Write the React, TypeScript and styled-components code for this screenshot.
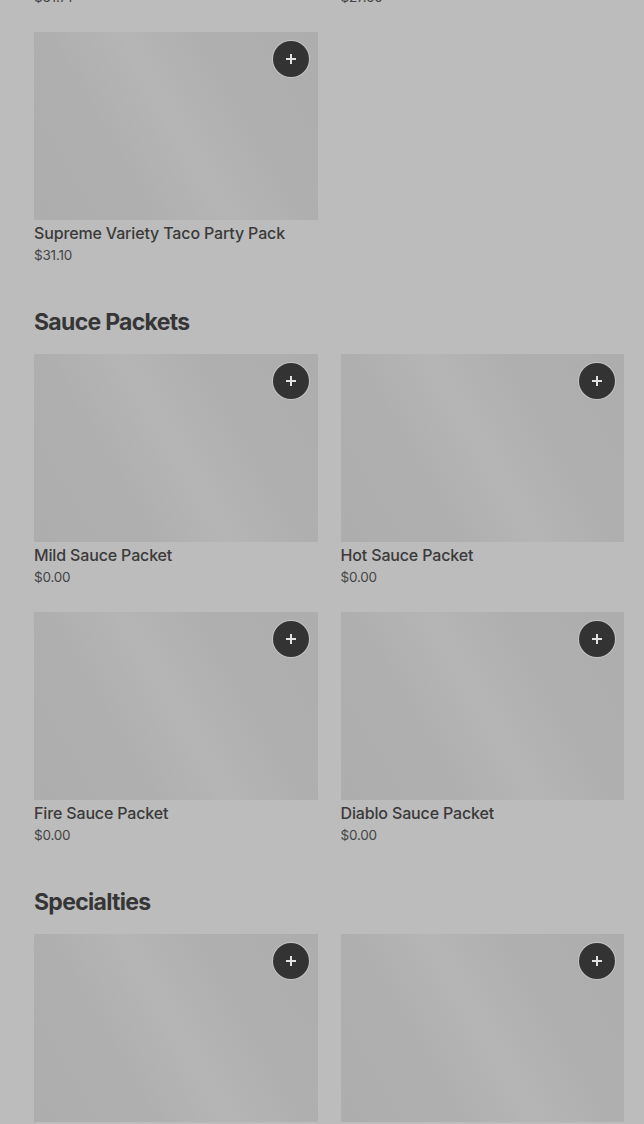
import styled, { createGlobalStyle } from 'styled-components'

type Item = { name: string; price: string }
type Section = { title?: string; items: Item[] }

const sections: Section[] = [
  {
    items: [
      { name: 'Taco Party Pack', price: '$31.71' },
      { name: 'Burrito Party Pack', price: '$27.50' },
      { name: 'Supreme Variety Taco Party Pack', price: '$31.10' },
    ],
  },
  {
    title: 'Sauce Packets',
    items: [
      { name: 'Mild Sauce Packet', price: '$0.00' },
      { name: 'Hot Sauce Packet', price: '$0.00' },
      { name: 'Fire Sauce Packet', price: '$0.00' },
      { name: 'Diablo Sauce Packet', price: '$0.00' },
    ],
  },
  {
    title: 'Specialties',
    items: [
      { name: 'Nachos BellGrande', price: '$6.49' },
      { name: 'Mexican Pizza', price: '$5.99' },
    ],
  },
]

const GlobalStyle = createGlobalStyle`
  html, body {
    margin: 0;
    padding: 0;
    background: #bcbcbc;
    overflow: hidden;
  }
  body {
    font-family: Inter, 'Noto Sans', sans-serif;
    color: #383838;
  }
`

const PlusIcon = () => (
  <svg width="12" height="12" viewBox="0 0 12 12" fill="none">
    <path d="M6 1v10M1 6h10" stroke="#e2e2e2" strokeWidth="2" />
  </svg>
)

export default function App() {
  return (
    <>
      <GlobalStyle />
      <Page>
        {sections.map((section, i) => (
          <MenuSection key={i}>
            {section.title && <Heading>{section.title}</Heading>}
            <Grid>
              {section.items.map((item) => (
                <Card key={item.name}>
                  <Thumb>
                    <AddButton aria-label="Add">
                      <PlusIcon />
                    </AddButton>
                  </Thumb>
                  <Name>{item.name}</Name>
                  <Price>{item.price}</Price>
                </Card>
              ))}
            </Grid>
          </MenuSection>
        ))}
      </Page>
    </>
  )
}

const Page = styled.main`
  margin-top: -226px;
  padding: 0 20px 0 34px;
  display: flex;
  flex-direction: column;
  gap: 41px;
`
const MenuSection = styled.section`
  display: flex;
  flex-direction: column;
  gap: 16px;
`
const Heading = styled.h2`
  margin: 0;
  font-size: 23px;
  line-height: 32px;
  font-weight: 650;
  letter-spacing: -0.7px;
  color: #363636;
`
const Grid = styled.div`
  display: grid;
  grid-template-columns: 1fr 1fr;
  column-gap: 23px;
  row-gap: 25px;
`
const Card = styled.div`
  display: flex;
  flex-direction: column;
`
const Thumb = styled.div`
  position: relative;
  height: 188px;
  background: linear-gradient(
    60deg,
    #adadad 0%,
    #afafaf 30%,
    #b5b5b5 50%,
    #afafaf 70%,
    #adadad 100%
  );
`
const AddButton = styled.button`
  position: absolute;
  top: 9px;
  right: 9px;
  width: 36px;
  height: 36px;
  border: none;
  border-radius: 50%;
  padding: 0;
  background: #333333;
  box-shadow: 0 0 0 1px #c4c4c4;
  display: flex;
  align-items: center;
  justify-content: center;
`
const Name = styled.div`
  margin-top: 1px;
  font-size: 16px;
  line-height: 24px;
  font-weight: 500;
  letter-spacing: -0.15px;
  color: #3a3a3a;
`
const Price = styled.div`
  font-size: 13.5px;
  line-height: 20px;
  letter-spacing: -0.2px;
  color: #454545;
`
